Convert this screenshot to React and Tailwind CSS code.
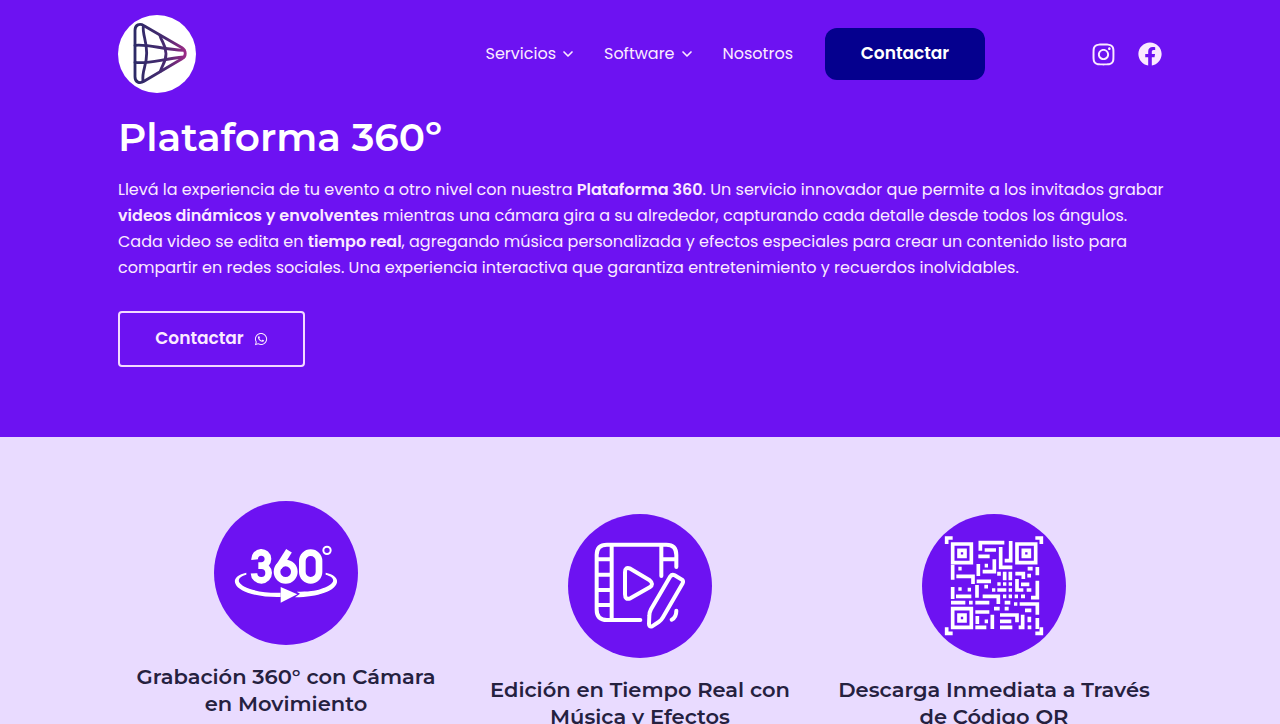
import { FaInstagram, FaFacebook, FaWhatsapp } from "react-icons/fa";
import { LuChevronDown } from "react-icons/lu";

const body = "font-['Poppins','Inter',sans-serif]";
const heading = "font-['Montserrat','Inter',sans-serif]";

function Logo() {
  return (
    <svg viewBox="0 0 234 234" className="size-[78px]" role="img" aria-label="Inicio">
      <defs>
        <linearGradient id="logo-ink" gradientUnits="userSpaceOnUse" x1="48" y1="0" x2="206" y2="0">
          <stop offset="0" stopColor="#2c2a66" />
          <stop offset="0.6" stopColor="#482a70" />
          <stop offset="1" stopColor="#a02a86" />
        </linearGradient>
      </defs>
      <circle cx="117" cy="117" r="117" fill="#fff" />
      <g fill="none" stroke="url(#logo-ink)" strokeWidth="8.5" strokeLinecap="round" strokeLinejoin="round">
        <path d="M51 46 C51 29 65 24 78 32 L192 98 C205 107 205 124 192 131 L78 199 C65 207 51 202 51 185 Z" />
        <path d="M76 33 C73 60 86 75 86 114 C86 155 71 165 75 199" />
        <path d="M126 62 C131 82 144 88 144 116 C144 142 131 152 127 169" />
        <path d="M51 91 C95 87 130 103 198 106" />
        <path d="M51 142 C95 147 130 132 198 126" />
      </g>
    </svg>
  );
}

function Icon360() {
  return (
    <svg viewBox="27 32 432 432" className="size-36" aria-hidden="true">
      <circle cx="243" cy="248" r="216" fill="#6d12f2" />
      <g fill="none" stroke="#fff" strokeWidth="20">
        <path d="M149 208 A20 20 0 1 1 169 226 H160 H169 A22 22 0 1 1 147 249" />
        <circle cx="242" cy="244" r="26" />
        <path d="M221 231 L252 181" />
        <rect x="292" y="187" width="50" height="83" rx="25" />
        <circle cx="366" cy="180" r="11" strokeWidth="6" />
      </g>
      <g fill="#fff">
        <path d="M124 247 C76 256 79 291 128 307 C156 317 192 321 227 320 L227 307 C192 308 157 304 133 295 C91 280 94 261 124 253 Z" />
        <path d="M362 247 C410 256 407 291 358 307 C334 316 306 320 270 321 L285 310 L275 304 C315 305 337 301 353 294 C395 279 392 261 362 253 Z" />
        <path d="M227 290 L277 312 L227 337 Z" />
      </g>
    </svg>
  );
}

function IconEdit() {
  return (
    <svg viewBox="24 27 432 432" className="size-36" aria-hidden="true">
      <circle cx="240" cy="243" r="216" fill="#6d12f2" />
      <g fill="none" stroke="#fff" strokeWidth="12" strokeLinecap="round" strokeLinejoin="round">
        <path d="M241 345 H141 Q110 345 110 314 V150 Q110 119 141 119 H319 Q349 119 349 150 V186" />
        <path d="M155 120 V344 M111 163 H154 M111 209 H154 M111 255 H154 M111 300 H154 M304 120 V213 M305 163 H348" />
        <path d="M195 202 Q195 184 211 191 L269 226 Q283 237 269 247 L211 280 Q195 286 195 268 Z" />
        <path d="M331 214 Q336 207 344 211 L366 224 Q371 228 368 235 L308 338 Q304 346 296 351 L276 364 Q267 367 267 357 L268 332 Q268 322 273 313 Z" />
        <path d="M349 317 Q349 337 335 344" />
      </g>
    </svg>
  );
}

function IconQr() {
  return (
    <svg viewBox="21 27 432 432" className="size-36" aria-hidden="true">
      <circle cx="237" cy="243" r="216" fill="#6d12f2" />
      <g fill="none" stroke="#fff" strokeWidth="11">
        <path d="M95 117 V99 H113 M361 99 H379 V117 M379 367 V385 H361 M113 385 H95 V367" />
        <path d="M113 117 H169 V173 H113 Z M306 117 H362 V173 H306 Z M113 311 H169 V367 H113 Z" />
        <path d="M132 136 H150 V154 H132 Z M325 136 H343 V154 H325 Z M132 330 H150 V348 H132 Z" />
        <path d="M196 137 V113 H268 M209 135 H243 M190 154 H224 M257 126 V187 H292 M287 108 V167 H269" />
        <path d="M113 179 V224 M130 191 H140 M124 214 H174 V237 M190 177 V213 M209 182 H219 M238 163 V200 H203 M185 229 H228" />
        <path d="M252 200 V212 M269 200 V226 M286 200 V226 M301 206 H325 V222 M338 191 H353 M367 186 V211 M337 212 H348 M306 222 V255 H325 M318 238 H343" />
        <path d="M113 246 V282 M130 252 H140 M158 254 H168 M123 274 H169 M186 240 V278 M208 245 H219 M231 255 H241 M203 274 H250 V297" />
        <path d="M247 237 H257 M264 237 H274 M281 237 H291 M247 255 H274 M281 255 H291 M264 274 H274 M281 274 H291 M299 274 H309 M318 274 H330 M335 255 H349 M367 227 V278 H348" />
        <path d="M108 293 H151 M162 293 H173 M181 293 H223 M181 321 H223 M269 293 H286 M297 297 H307 M314 297 H367 V329 M237 311 H254 M269 311 H281 M255 330 H306 V352" />
        <path d="M187 333 V357 M181 367 H214 M209 349 H219 M232 329 V372 M255 349 H289 M255 367 H292 M323 329 V367 H311 M330 316 H349 M343 335 V352 M338 367 H349 M367 339 V372" />
      </g>
    </svg>
  );
}

const features = [
  { icon: Icon360, lines: ["Grabación 360° con Cámara", "en Movimiento"], pad: "" },
  { icon: IconEdit, lines: ["Edición en Tiempo Real con", "Música y Efectos"], pad: "pt-[13px]" },
  { icon: IconQr, lines: ["Descarga Inmediata a Través", "de Código QR"], pad: "pt-[13px]" },
];

export default function App() {
  return (
    <div className={`min-h-screen bg-[#e9dbff] ${body}`}>
      <div className="bg-[#6d12f2] text-[#fbeaff]">
        <div className="mx-auto max-w-[1044px] pb-[70px]">
          <header className="flex items-center pt-[15px]">
            <a href="#inicio" className="mr-auto"><Logo /></a>
            <nav className="flex items-center gap-8 text-base">
              <div className="flex items-center gap-7">
                <a href="#servicios" className="flex items-center gap-1">Servicios <LuChevronDown className="size-4" strokeWidth={2.5} /></a>
                <a href="#software" className="flex items-center gap-1">Software <LuChevronDown className="size-4" strokeWidth={2.5} /></a>
                <a href="#nosotros">Nosotros</a>
              </div>
              <button type="button" className="h-[52px] w-[160px] rounded-xl bg-[#05008e] text-[17px] font-semibold text-white">Contactar</button>
            </nav>
            <div className="ml-[106px] flex items-center gap-[22px]">
              <a href="#instagram" aria-label="Instagram"><FaInstagram className="size-[25px]" /></a>
              <a href="#facebook" aria-label="Facebook"><FaFacebook className="size-6" /></a>
            </div>
          </header>
          <main>
            <h1 className={`mt-5 text-[39px] leading-[48px] font-semibold text-white ${heading}`}>Plataforma 360º</h1>
            <p className="mt-4 text-base leading-[26px] whitespace-nowrap">
              Llevá la experiencia de tu evento a otro nivel con nuestra <strong className="font-semibold">Plataforma 360</strong>. Un servicio innovador que permite a los invitados grabar<br />
              <strong className="font-semibold">videos dinámicos y envolventes</strong> mientras una cámara gira a su alrededor, capturando cada detalle desde todos los ángulos.<br />
              Cada video se edita en <strong className="font-semibold">tiempo real</strong>, agregando música personalizada y efectos especiales para crear un contenido listo para<br />
              compartir en redes sociales. Una experiencia interactiva que garantiza entretenimiento y recuerdos inolvidables.
            </p>
            <button type="button" className="mt-[30px] flex h-14 w-[187px] items-center justify-center gap-[10px] rounded-[4px] border-2 border-[#f3d9ff] text-[17px] font-semibold">
              Contactar <FaWhatsapp className="size-[14px]" />
            </button>
          </main>
        </div>
      </div>
      <section className="mx-auto grid max-w-[1044px] grid-cols-3 gap-[18px] pt-16">
        {features.map(({ icon: Icon, lines, pad }) => (
          <article key={lines[0]} className={`flex flex-col items-center ${pad}`}>
            <Icon />
            <h2 className={`mt-[18px] text-center text-[21px] leading-[27px] font-semibold text-[#25213f] ${heading}`}>
              {lines[0]}<br />{lines[1]}
            </h2>
          </article>
        ))}
      </section>
    </div>
  );
}
